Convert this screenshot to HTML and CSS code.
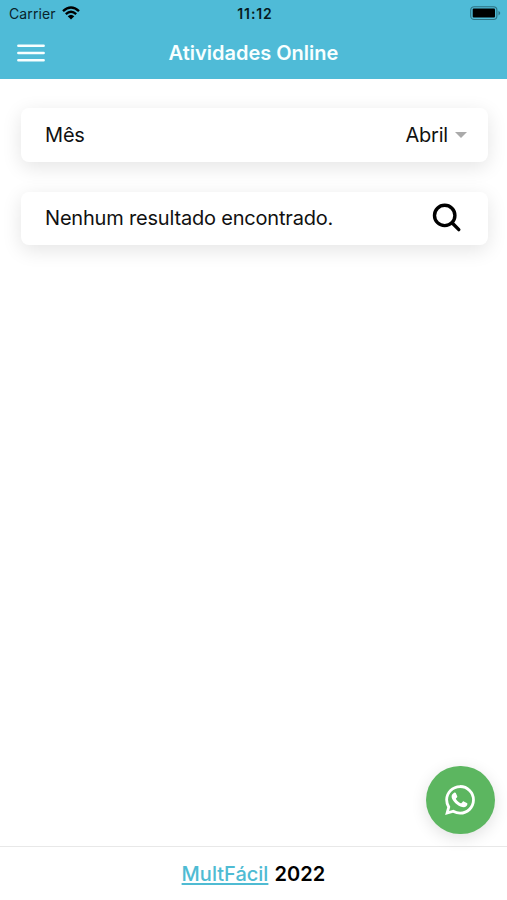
FILE: index.html
```html
<!DOCTYPE html>
<html lang="pt-BR">
<head>
<meta charset="utf-8">
<title>Atividades Online</title>
<link rel="stylesheet" href="styles.css">
</head>
<body>
<header class="header">
  <div class="status">
    <div class="carrier"><span>Carrier</span>
      <svg class="wifi" viewBox="0 0 18 14"><path d="M1 5.2Q9-2 17 5.2M3.8 8.1Q9 3.5 14.2 8.1" fill="none" stroke="#000" stroke-width="2.4"/><path d="M5.7 10.2Q9 7.2 12.3 10.2L9 13.6Z"/></svg>
    </div>
    <span class="time">11:12</span>
    <svg class="battery" viewBox="0 0 31 15"><rect x=".7" y=".7" width="26.2" height="12.8" rx="3.5" fill="none" stroke="#2d7283" stroke-width="1.1"/><rect x="2.7" y="2.6" width="22.3" height="9" rx="1"/><path d="M28.5 4.8Q32 7.1 28.5 9.4Z" fill="#2d7283"/></svg>
  </div>
  <div class="nav">
    <button class="menu" aria-label="Menu">
      <svg viewBox="0 0 28 20"><path d="M1.4 2.8H26.6M1.4 10H26.6M1.4 17.2H26.6"/></svg>
    </button>
    <h1>Atividades Online</h1>
  </div>
</header>
<main class="content">
  <section class="card">
    <span class="month">Mês</span>
    <div class="select"><span>Abril</span><i class="caret"></i></div>
  </section>
  <section class="card">
    <span class="result">Nenhum resultado encontrado.</span>
    <svg class="search" viewBox="0 0 30 30"><circle cx="12.7" cy="12.4" r="10.2"/><path d="M20 19.8L26.8 26.6"/></svg>
  </section>
</main>
<button class="fab" aria-label="WhatsApp">
  <svg viewBox="0 0 512 512"><path fill-rule="evenodd" d="M414.73 97.1A222.14 222.14 0 0 0 256.94 32C134 32 33.92 131.58 33.87 254a220.61 220.61 0 0 0 29.78 111L32 480l118.25-30.87a223.63 223.63 0 0 0 106.6 27h.09c122.93 0 223-99.59 223.06-222A220.18 220.18 0 0 0 414.73 97.1zM256.94 434h-.08a182 182 0 0 1-92-25.72l-6.77-4-66 17 17.5-64-4.41-7A180 180 0 0 1 76 254c0-99 81-180 181-180a180.5 180.5 0 0 1 181 180c0 99-81 180-181 180z"/><path d="M167 146c10-6 20-7 26 4l21 48c4 10-2 17-17 33-5 5-4 9 0 15 16 27 40 47 69 59 6 3 10 2 14-3l17-21c5-6 10-6 16-3l46 22c8 4 10 8 9 16-3 29-26 49-56 50-30 0-66-14-101-41-34-26-59-56-74-88-16-35-7-72 30-91z"/></svg>
</button>
<footer class="footer"><a href="#">MultFácil</a><strong>2022</strong></footer>
</body>
</html>
```

FILE: styles.css
```css
* { box-sizing: border-box; }
body {
  margin: 0;
  height: 900px;
  display: flex;
  flex-direction: column;
  overflow: hidden;
  background: #fff;
  color: #111;
  font-family: Inter, "Liberation Sans", sans-serif;
  font-size: 20px;
}
button { border: 0; padding: 0; }
.header { height: 79px; background: #4fbbd7; }
.status {
  height: 27px;
  padding: 0 6px 0 9px;
  display: grid;
  grid-template-columns: 1fr auto 1fr;
  align-items: center;
  color: #09242b;
  font-size: 14px;
}
.carrier { display: flex; align-items: center; gap: 6px; letter-spacing: .1px; }
.wifi { width: 18px; height: 14px; margin-top: -1px; }
.time { color: #061a20; font-weight: 600; letter-spacing: .9px; }
.battery { width: 31px; height: 15px; justify-self: end; }
.nav {
  height: 52px;
  padding: 0 17px;
  display: grid;
  grid-template-columns: 28px 1fr 28px;
  align-items: center;
}
.menu { display: flex; background: none; }
.menu svg {
  width: 28px;
  height: 20px;
  fill: none;
  stroke: #f8ffff;
  stroke-width: 2.6;
  stroke-linecap: round;
}
.nav h1 {
  margin: 0;
  color: #f8ffff;
  font-size: 20px;
  font-weight: 600;
  text-align: center;
}
.content {
  flex: 1;
  padding: 29px 19px 0 21px;
  display: flex;
  flex-direction: column;
  gap: 30px;
}
.card {
  height: 53.5px;
  padding: 0 21px 0 24px;
  display: flex;
  align-items: center;
  justify-content: space-between;
  border-radius: 8px;
  background: #fff;
  box-shadow: 0 5px 20px rgba(0, 0, 0, .11);
  letter-spacing: -.19px;
}
.select { display: flex; align-items: center; gap: 7px; }
.caret {
  border: 6px solid transparent;
  border-top: 6px solid #aaa;
  border-bottom: 0;
}
.search {
  width: 30px;
  height: 30px;
  margin-right: 5px;
  fill: none;
  stroke: #000;
  stroke-width: 3.4;
  stroke-linecap: round;
}
.fab {
  position: absolute;
  right: 12.5px;
  top: 765.5px;
  width: 68.5px;
  height: 68.5px;
  display: flex;
  align-items: center;
  justify-content: center;
  border-radius: 50%;
  background: #5cb660;
  box-shadow: 0 4px 16px rgba(0, 0, 0, .12);
}
.fab svg { width: 34px; height: 34px; fill: #fff; }
.footer {
  height: 54px;
  padding-top: 1px;
  display: flex;
  align-items: center;
  justify-content: center;
  gap: 6px;
  border-top: 1px solid #e8e8e8;
}
.footer a {
  color: #4fbbd3;
  font-weight: 500;
  text-decoration-thickness: 2px;
  text-underline-offset: 2px;
}
.footer strong { color: #000; font-weight: 600; letter-spacing: .1px; }
```
